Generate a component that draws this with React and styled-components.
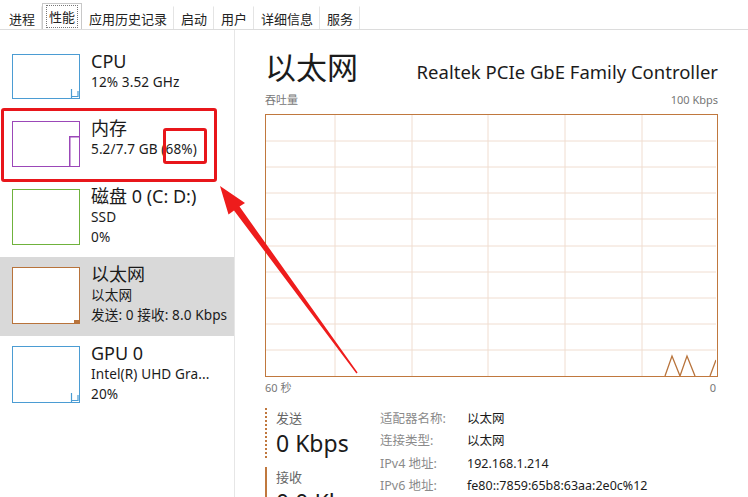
import styled, { createGlobalStyle } from 'styled-components'

const GlobalStyle = createGlobalStyle`
body {
  margin: 0;
  background: #fff;
  font-family: "Segoe UI", "Noto Sans", "Noto Sans CJK SC", sans-serif;
  color: #1b1b1b;
}
`
const Window = styled.div`
position: relative;
width: 748px;
height: 497px;
overflow: hidden;
background: #fff;
`
const TabBar = styled.div`
display: flex;
align-items: flex-end;
height: 30px;
padding-left: 2px;
border-bottom: 1px solid #dcdcdc;
box-sizing: border-box;
`
const Tab = styled.div`
height: ${props => props.active ? '26px' : '23px'};
padding: 0 4px;
display: flex;
align-items: center;
font-size: 13px;
color: #222;
border: 1px solid ${props => props.active ? '#c8c8c8' : 'transparent'};
border-bottom: none;
border-right: 1px solid ${props => props.active ? '#c8c8c8' : '#e4e4e4'};
background: #fff;
box-sizing: border-box;
span {
  padding: 1px 2px;
  outline: ${props => props.active ? '1px dotted #777' : 'none'};
}
`
const Body = styled.div`
display: flex;
height: 467px;
`
const Sidebar = styled.div`
width: 234px;
flex: none;
padding-top: 14px;
border-right: 1px solid #e6e6e6;
overflow: hidden;
`
const Item = styled.div`
display: flex;
align-items: flex-start;
height: ${props => props.h + 22}px;
box-sizing: border-box;
padding: 10px 0 0 12px;
background: ${props => props.selected ? '#d9d9d9' : 'transparent'};
`
const Thumb = styled.div`
width: 68px;
height: ${props => props.h}px;
border: 1.5px solid ${props => props.color};
box-sizing: border-box;
background: #fff;
flex: none;
position: relative;
`
const ThumbMark = styled.svg`
position: absolute;
right: 0;
bottom: 0;
`
const ItemText = styled.div`
margin-left: 11px;
margin-top: -3px;
display: flex;
flex-direction: column;
white-space: nowrap;
`
const ItemTitle = styled.div`
font-size: 18px;
line-height: 21px;
`
const ItemSub = styled.div`
font-size: 13.6px;
line-height: 19.5px;
letter-spacing: 0.1px;
`
const Main = styled.div`
flex: 1;
padding: 17px 0 0 30px;
display: flex;
flex-direction: column;
`
const HeadRow = styled.div`
display: flex;
align-items: baseline;
justify-content: space-between;
width: 453px;
`
const BigTitle = styled.div`
font-size: 31px;
line-height: 40px;
`
const Model = styled.div`
font-size: 18.5px;
`
const AxisRow = styled.div`
display: flex;
justify-content: space-between;
width: 453px;
font-size: 11px;
color: #777;
line-height: 14px;
margin-top: ${props => props.top || 0}px;
`
const Graph = styled.div`
width: 453px;
height: 264px;
margin-top: 7px;
border: 1.5px solid #c0783e;
box-sizing: border-box;
`
const Details = styled.div`
display: flex;
margin-top: 13px;
`
const Stats = styled.div`
width: 115px;
display: flex;
flex-direction: column;
gap: 9px;
`
const Stat = styled.div`
padding-left: 9px;
border-left: 2px ${props => props.dotted ? 'dotted' : 'solid'} #c0783e;
`
const StatLabel = styled.div`
font-size: 13px;
color: #666;
line-height: 20px;
`
const StatValue = styled.div`
font-size: 23px;
line-height: 30px;
`
const InfoGrid = styled.div`
display: grid;
grid-template-columns: 87px auto;
grid-auto-rows: 22.3px;
font-size: 12.5px;
line-height: 22px;
`
const InfoLabel = styled.div`
color: #8a8a8a;
`
const InfoValue = styled.div`
color: #1b1b1b;
`
const Overlay = styled.svg`
position: absolute;
left: 0;
top: 0;
pointer-events: none;
`
const RedBox = styled.div`
position: absolute;
left: ${props => props.x}px;
top: ${props => props.y}px;
width: ${props => props.w}px;
height: ${props => props.h}px;
border: 3px solid #e8161b;
border-radius: 3px;
box-sizing: border-box;
`

const tabs = ['进程', '性能', '应用历史记录', '启动', '用户', '详细信息', '服务']

const items = [
  { title: 'CPU', lines: ['12% 3.52 GHz'], color: '#4b9cd3', h: 45, mark: 'blue' },
  { title: '内存', lines: ['5.2/7.7 GB (68%)'], color: '#9b47b8', h: 46, mark: 'mem' },
  { title: '磁盘 0 (C: D:)', lines: ['SSD', '0%'], color: '#6fb23c', h: 56 },
  { title: '以太网', lines: ['以太网', '发送: 0 接收: 8.0 Kbps'], color: '#b8733b', h: 57, selected: true, mark: 'eth' },
  { title: 'GPU 0', lines: ['Intel(R) UHD Gra...', '20%'], color: '#4b9cd3', h: 57, mark: 'blue' },
]

function Mark({ type }) {
  if (type === 'mem')
    return (
      <ThumbMark width="10" height="30" viewBox="0 0 10 30">
        <rect x="0.75" y="0.75" width="10" height="30" fill="none" stroke="#9b47b8" strokeWidth="1.5" />
      </ThumbMark>
    )
  if (type === 'blue')
    return (
      <ThumbMark width="9" height="10" viewBox="0 0 9 10">
        <path d="M1.5 10 V1 M1.5 8.5 H8 V3" fill="none" stroke="#4b9cd3" strokeWidth="1.2" />
      </ThumbMark>
    )
  if (type === 'eth')
    return (
      <ThumbMark width="5" height="3" viewBox="0 0 5 3">
        <rect width="5" height="3" fill="#b8733b" />
      </ThumbMark>
    )
  return null
}

function ChartLines() {
  const w = 450, h = 261
  const vx = [69, 146, 222, 299, 376]
  const hy = Array.from({ length: 9 }, (_, i) => Math.round((i + 1) * h / 10))
  return (
    <svg width={w} height={h} viewBox={`0 0 ${w} ${h}`} style={{ display: 'block' }}>
      {vx.map(x => <line key={x} x1={x} y1="0" x2={x} y2={h} stroke="#f0ddd0" strokeWidth="1" />)}
      {hy.map(y => <line key={y} x1="0" y1={y} x2={w} y2={y} stroke="#f0ddd0" strokeWidth="1" />)}
      <polyline points="399,261 406,241 414,261 421,241 429,261" fill="none" stroke="#b8733b" strokeWidth="1.3" />
      <polyline points="444,261 450,245" fill="none" stroke="#b8733b" strokeWidth="1.3" />
    </svg>
  )
}

export default function App() {
  return (
    <Window>
      <GlobalStyle />
      <TabBar>
        {tabs.map(t => (
          <Tab key={t} active={t === '性能'}><span>{t}</span></Tab>
        ))}
      </TabBar>
      <Body>
        <Sidebar>
          {items.map(it => (
            <Item key={it.title} selected={it.selected} h={it.h}>
              <Thumb color={it.color} h={it.h}>
                <Mark type={it.mark} />
              </Thumb>
              <ItemText>
                <ItemTitle>{it.title}</ItemTitle>
                {it.lines.map(l => <ItemSub key={l}>{l}</ItemSub>)}
              </ItemText>
            </Item>
          ))}
        </Sidebar>
        <Main>
          <HeadRow>
            <BigTitle>以太网</BigTitle>
            <Model>Realtek PCIe GbE Family Controller</Model>
          </HeadRow>
          <AxisRow top={6}>
            <span>吞吐量</span>
            <span>100 Kbps</span>
          </AxisRow>
          <Graph>
            <ChartLines />
          </Graph>
          <AxisRow top={4}>
            <span>60 秒</span>
            <span style={{ paddingRight: 2 }}>0</span>
          </AxisRow>
          <Details>
            <Stats>
              <Stat dotted>
                <StatLabel>发送</StatLabel>
                <StatValue>0 Kbps</StatValue>
              </Stat>
              <Stat>
                <StatLabel>接收</StatLabel>
                <StatValue>0.0 Kbps</StatValue>
              </Stat>
            </Stats>
            <InfoGrid>
              <InfoLabel>适配器名称:</InfoLabel>
              <InfoValue>以太网</InfoValue>
              <InfoLabel>连接类型:</InfoLabel>
              <InfoValue>以太网</InfoValue>
              <InfoLabel>IPv4 地址:</InfoLabel>
              <InfoValue>192.168.1.214</InfoValue>
              <InfoLabel>IPv6 地址:</InfoLabel>
              <InfoValue>fe80::7859:65b8:63aa:2e0c%12</InfoValue>
            </InfoGrid>
          </Details>
        </Main>
      </Body>
      <RedBox x={1} y={108} w={216} h={74} />
      <RedBox x={163} y={128} w={44} h={36} />
      <Overlay width="748" height="497" viewBox="0 0 748 497">
        <polygon
          points="220,186 245,203 239.5,206.5 357.6,372.6 356.4,373.4 234,210.5 228.5,214.5"
          fill="#ee1c1c"
        />
      </Overlay>
    </Window>
  )
}
